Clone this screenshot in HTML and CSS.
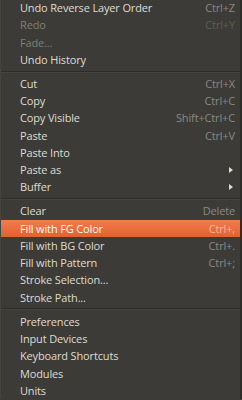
FILE: index.html
```html
<!DOCTYPE html>
<html lang="en">
<head>
  <meta charset="UTF-8" />
  <meta name="viewport" content="width=device-width, initial-scale=1.0" />
  <title>Edit Menu</title>
  <link rel="stylesheet" href="styles.css">
</head>
<body>
  <div class="menu">
    <div class="item"><span class="label">Undo Reverse Layer Order</span><span class="accel">Ctrl+Z</span></div>
    <div class="item disabled"><span class="label">Redo</span><span class="accel">Ctrl+Y</span></div>
    <div class="item disabled"><span class="label">Fade...</span></div>
    <div class="item"><span class="label">Undo History</span></div>

    <div class="separator"></div>

    <div class="item"><span class="label">Cut</span><span class="accel">Ctrl+X</span></div>
    <div class="item"><span class="label">Copy</span><span class="accel">Ctrl+C</span></div>
    <div class="item"><span class="label">Copy Visible</span><span class="accel">Shift+Ctrl+C</span></div>
    <div class="item"><span class="label">Paste</span><span class="accel">Ctrl+V</span></div>
    <div class="item"><span class="label">Paste Into</span></div>
    <div class="item"><span class="label">Paste as</span><span class="arrow"></span></div>
    <div class="item"><span class="label">Buffer</span><span class="arrow"></span></div>

    <div class="separator"></div>

    <div class="item"><span class="label">Clear</span><span class="accel">Delete</span></div>
    <div class="item active"><span class="label">Fill with FG Color</span><span class="accel">Ctrl+,</span></div>
    <div class="item"><span class="label">Fill with BG Color</span><span class="accel">Ctrl+.</span></div>
    <div class="item"><span class="label">Fill with Pattern</span><span class="accel">Ctrl+;</span></div>
    <div class="item"><span class="label">Stroke Selection...</span></div>
    <div class="item"><span class="label">Stroke Path...</span></div>

    <div class="separator"></div>

    <div class="item"><span class="label">Preferences</span></div>
    <div class="item"><span class="label">Input Devices</span></div>
    <div class="item"><span class="label">Keyboard Shortcuts</span></div>
    <div class="item"><span class="label">Modules</span></div>
    <div class="item"><span class="label">Units</span></div>
  </div>
</body>
</html>
```

FILE: styles.css
```css
html, body {
  margin: 0;
  padding: 0;
  width: 100%;
  height: 100%;
  overflow: hidden;
  background: #3c3b37;
}

.menu {
  height: 100%;
  margin-top: -1px;
  border-left: 1px solid #45443f;
  border-right: 2px solid #2e2d2a;
  background: #3c3b37;
  font-family: 'Open Sans', sans-serif;
  font-size: 11px;
  letter-spacing: -0.15px;
  color: #dfdbd2;
}

.item {
  display: flex;
  align-items: center;
  justify-content: space-between;
  height: 17.25px;
  padding: 0 5px 0 19px;
  white-space: nowrap;
}

.item.disabled {
  color: #7f7e79;
}

.accel {
  color: #8a8985;
}

.item.disabled .accel {
  color: #5f5e5a;
}

.item.active {
  background: linear-gradient(#f27c4e, #e2612f);
  color: #ffffff;
}

.item.active .accel {
  color: #f8b898;
}

.arrow {
  width: 0;
  height: 0;
  margin-right: 2px;
  border-top: 3px solid transparent;
  border-bottom: 3px solid transparent;
  border-left: 4px solid #dfdbd2;
}

.separator {
  height: 1px;
  margin: 2.5px 0 2.3px;
  border-bottom: 1px solid #45443f;
  background: #2e2d2a;
}
```
